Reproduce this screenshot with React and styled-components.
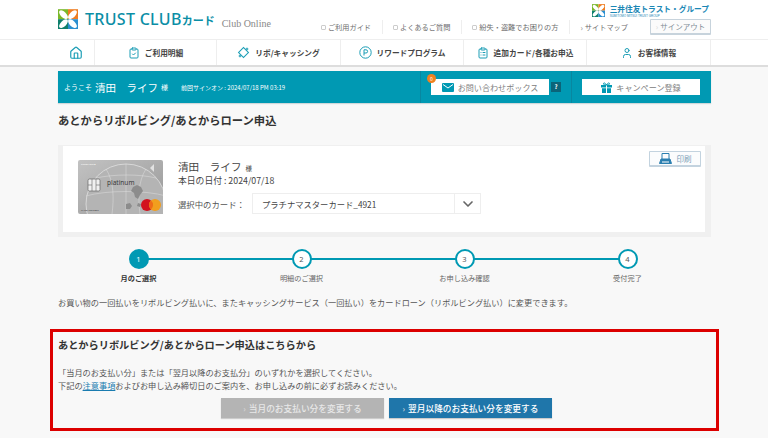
import React from 'react'
import styled, { createGlobalStyle } from 'styled-components'
import { Home, ClipboardCheck, ClipboardList, User, ChevronDown } from 'lucide-react'

const GlobalStyle = createGlobalStyle`
  html, body {
    margin: 0;
    padding: 0;
    background: #f8f8f8;
    overflow: hidden;
  }
  body {
    font-family: "Noto Sans CJK JP", "Noto Sans", sans-serif;
    color: #444;
  }
`

const Page = styled.div`
  width: 768px;
  height: 438px;
  overflow: hidden;
`

const HeaderBar = styled.header`
  height: 39px;
  background: #fff;
  padding: 0 57px 0 58px;
  display: flex;
  justify-content: space-between;
`

const BrandBlock = styled.div`
  display: flex;
  align-items: flex-start;
  padding-top: 9px;
`

const BrandName = styled.span`
  font-family: "Noto Sans", sans-serif;
  font-size: 16px;
  line-height: 20px;
  font-weight: 500;
  color: #0b8ea6;
  margin-left: 7px;
  white-space: nowrap;
  letter-spacing: 0.3px;

  b {
    font-family: "Noto Sans CJK JP", sans-serif;
    font-size: 11px;
    font-weight: 700;
    letter-spacing: 0;
  }
`

const BrandSub = styled.span`
  font-family: "Liberation Serif", serif;
  font-size: 10px;
  color: #888;
  margin: 9px 0 0 7px;
  white-space: nowrap;
`

const HeaderRight = styled.div`
  display: flex;
  flex-direction: column;
  align-items: flex-end;
`

const GroupLogo = styled.div`
  box-sizing: border-box;
  display: flex;
  align-items: flex-start;
  gap: 5px;
  height: 19px;
  padding-top: 4px;
  margin-right: 2px;
`

const GroupText = styled.div`
  display: flex;
  flex-direction: column;
  color: #1b87b5;
  font-size: 7.7px;
  font-weight: 700;
  line-height: 10px;
  white-space: nowrap;
`

const GroupSmall = styled.span`
  font-family: "Liberation Sans", sans-serif;
  font-size: 3px;
  line-height: 4px;
  font-weight: 400;
`

const UtilRow = styled.nav`
  display: flex;
  align-items: center;
  height: 16px;
`

const UtilLink = styled.a`
  display: flex;
  align-items: center;
  gap: 2px;
  font-size: 7.2px;
  color: #6e6e6e;
  padding: 0 ${({ $plain }) => ($plain ? 22 : 11)}px 0 10px;
  height: 14px;
  border-right: ${({ $plain }) => ($plain ? '0' : '1px solid #eee')};
  white-space: nowrap;
`

const UtilMark = styled.i`
  width: 3px;
  height: 3px;
  border: 1px solid #ccc;
  border-radius: 1px;
`

const Chevron = styled.span`
  font-size: 8px;
  color: ${({ $light }) => ($light ? '#d8d8d8' : '#888')};
`

const SignOut = styled.a`
  display: flex;
  align-items: center;
  justify-content: center;
  gap: 2px;
  width: 61px;
  height: 16px;
  font-size: 7.5px;
  color: #7f8d97;
  background: #fbfbfb;
  border: 1px solid #c7d3dc;
  border-bottom-width: 2px;
  box-sizing: border-box;
  border-radius: 1px;
`

const NavBar = styled.nav`
  box-sizing: border-box;
  height: 28px;
  background: #fff;
  border-top: 1px solid #eee;
  border-bottom: 2px solid #ddd;
  padding-left: 58px;
  display: flex;
`

const NavItem = styled.a`
  width: ${({ $w }) => $w}px;
  flex: none;
  box-sizing: border-box;
  display: flex;
  align-items: center;
  justify-content: center;
  gap: 5px;
  border-right: 1px solid #eee;
  font-size: 7.7px;
  font-weight: 700;
  color: #444;
  white-space: nowrap;

  svg {
    color: #1a9db5;
  }
`

const Container = styled.main`
  width: 653px;
  margin: 4px 0 0 58px;
`

const WelcomeBar = styled.section`
  height: 32px;
  background: #0099b3;
  display: flex;
  color: #fff;
  box-shadow: 0 1px 1px #cfd8da;
`

const Greeting = styled.div`
  flex: 1;
  display: flex;
  align-items: center;
  padding-left: 6px;
  font-size: 7px;
  white-space: nowrap;
`

const GreetName = styled.span`
  font-size: 10.5px;
  margin: 0 3px;
`

const LastSign = styled.span`
  font-size: 6px;
  margin-left: 13px;
`

const BarCell = styled.div`
  width: ${({ $w }) => $w}px;
  box-sizing: border-box;
  border-left: 1px solid #0887a0;
  display: flex;
  align-items: center;
  gap: 2px;
  padding-left: ${({ $pad }) => $pad}px;
`

const BarButton = styled.a`
  position: relative;
  width: 118px;
  height: 16px;
  background: #fff;
  display: flex;
  align-items: center;
  justify-content: center;
  gap: 4px;
  font-size: 8.1px;
  color: #808080;
  white-space: nowrap;

  svg {
    color: #0099b3;
  }
`

const Badge = styled.span`
  position: absolute;
  left: -4px;
  top: -5px;
  width: 9px;
  height: 9px;
  border-radius: 50%;
  background: #f0811f;
  color: #fff;
  font-size: 5px;
  line-height: 9px;
  text-align: center;
`

const HelpMark = styled.span`
  width: 10px;
  height: 10px;
  background: #0b6479;
  color: #fff;
  font-size: 6px;
  font-weight: 700;
  line-height: 10px;
  text-align: center;
`

const PageTitle = styled.h1`
  margin: 9px 0 17px;
  font-size: 11.3px;
  line-height: 16px;
  font-weight: 700;
  color: #333;
`

const CardPanel = styled.section`
  position: relative;
  box-sizing: border-box;
  height: 92px;
  background: #fff;
  border: 5px solid #f0f0f0;
  border-top-width: 1px;
  border-right-width: 6px;
  display: flex;
  padding: 14px 0 0 15px;
`

const CardInfo = styled.div`
  margin-left: 15px;
  flex: 1;
`

const HolderName = styled.div`
  font-size: 10.6px;
  line-height: 12px;
  margin-top: 1px;
  color: #444;

  small {
    font-size: 6.5px;
    margin-left: 4px;
  }
`

const TodayLine = styled.div`
  font-size: 8.8px;
  line-height: 10px;
  margin-top: 2px;
  color: #444;
`

const SelectRow = styled.div`
  display: flex;
  align-items: center;
  margin-top: 7px;
  font-size: 8.4px;
  color: #555;
`

const SelectBox = styled.div`
  width: 229px;
  height: 21px;
  box-sizing: border-box;
  margin-left: 7px;
  border: 1px solid #eee;
  display: flex;
  align-items: center;
  padding-left: 9px;
  font-size: 8.3px;
  color: #444;
`

const SelectArrow = styled.span`
  margin-left: auto;
  width: 25px;
  height: 100%;
  border-left: 1px solid #eee;
  display: flex;
  align-items: center;
  justify-content: center;
  color: #666;
`

const PrintButton = styled.a`
  position: absolute;
  top: 5px;
  right: 4px;
  width: 52px;
  height: 16px;
  box-sizing: border-box;
  border: 1px solid #c3d3df;
  border-bottom-width: 2px;
  border-radius: 1px;
  display: flex;
  align-items: center;
  justify-content: center;
  gap: 5px;
  font-size: 7.5px;
  color: #7da0b8;
  background: #fbfcfd;

  svg {
    color: #2a7fb0;
  }
`

const StepList = styled.ol`
  list-style: none;
  margin: 12px 0 0 -1px;
  padding: 0;
  display: grid;
  grid-template-columns: repeat(4, 163px);
`

const Step = styled.li`
  position: relative;
  display: flex;
  flex-direction: column;
  align-items: center;

  &:not(:last-child)::after {
    content: '';
    position: absolute;
    left: 50%;
    width: 100%;
    top: 9px;
    height: 2px;
    background: #0099b3;
  }
`

const StepDot = styled.span`
  position: relative;
  z-index: 1;
  width: 20px;
  height: 20px;
  box-sizing: border-box;
  border-radius: 50%;
  border: 2px solid #0099b3;
  background: ${({ $active }) => ($active ? '#0099b3' : '#fff')};
  color: ${({ $active }) => ($active ? '#fff' : '#555')};
  font-family: "Noto Sans", sans-serif;
  font-size: 7.5px;
  font-weight: 400;
  line-height: 16px;
  text-align: center;
`

const StepLabel = styled.span`
  margin-top: 4px;
  font-size: 7.2px;
  line-height: 11px;
  font-weight: ${({ $active }) => ($active ? 700 : 400)};
  color: ${({ $active }) => ($active ? '#333' : '#666')};
`

const Lead = styled.p`
  margin: 12px 0 0;
  font-size: 8.2px;
  line-height: 13px;
  color: #555;
  white-space: nowrap;
`

const ApplyBox = styled.section`
  box-sizing: border-box;
  width: 669px;
  height: 102px;
  margin: 20px 0 0 -8px;
  border: 3px solid #dc0000;
  padding: 5px 5px 0;
`

const ApplyTitle = styled.h2`
  margin: 0 0 13px;
  font-size: 10.2px;
  line-height: 16px;
  font-weight: 700;
  color: #333;
`

const ApplyText = styled.p`
  margin: 0;
  font-size: 8.2px;
  line-height: 13px;
  color: #555;
  white-space: nowrap;

  a {
    color: #1a7cb0;
    text-decoration: underline;
  }
`

const ButtonRow = styled.div`
  display: flex;
  gap: 5px;
  margin: 6px 0 0 163px;
`

const ActionButton = styled.a`
  width: 163px;
  height: 20px;
  display: flex;
  align-items: center;
  justify-content: center;
  gap: 3px;
  font-size: 8.7px;
  font-weight: 500;
  white-space: nowrap;
  color: ${({ $muted }) => ($muted ? '#e8e8e8' : '#fff')};
  background: ${({ $muted }) => ($muted ? '#b4b4b4' : '#1f76aa')};
  box-shadow: 0 1px 1px #ccc;
`

function Diamond() {
  return (
    <svg width="13" height="13" viewBox="0 0 13 13" fill="none" stroke="currentColor" strokeWidth="1">
      <rect x="3" y="3" width="7" height="7" transform="rotate(45 6.5 6.5)" />
      <circle cx="10" cy="3" r="0.9" fill="#fff" />
      <circle cx="3" cy="10" r="0.9" fill="#fff" />
    </svg>
  )
}

function PointMark() {
  return (
    <svg width="13" height="13" viewBox="0 0 13 13" fill="none" stroke="currentColor">
      <circle cx="6.5" cy="6.5" r="5.7" />
      <path d="M5 9.500V3.800h2a1.600 1.600 0 0 1 0 3.200H5" />
    </svg>
  )
}

function MailFilled() {
  return (
    <svg width="12" height="9" viewBox="0 0 12 9">
      <rect width="12" height="9" rx="1" fill="currentColor" />
      <path d="M1 1.500l5 3.500 5-3.500" fill="none" stroke="#fff" />
    </svg>
  )
}

function GiftFilled() {
  return (
    <svg width="11" height="11" viewBox="0 0 11 11" fill="currentColor">
      <path d="M0 3h5v2.500H0zM6 3h5v2.500H6zM1 6.300h4V11H1zM6 6.300h4V11H6z" />
      <path d="M5.500 3C4 .5 2.500.5 2.500 1.700S4 3 5.500 3zM5.500 3C7 .5 8.500.5 8.500 1.700S7 3 5.500 3z" fill="none" stroke="currentColor" />
    </svg>
  )
}

function PrinterFlat() {
  return (
    <svg width="13" height="11" viewBox="0 0 13 11" fill="none" stroke="currentColor">
      <path d="M3 6V.5h7V6" />
      <path d="M.5 10.500l1.500-4.500h9l1.500 4.500z" fill="currentColor" />
      <path d="M3 9h7" stroke="#fff" />
    </svg>
  )
}

function BrandMark({ size }) {
  return (
    <svg width={size} height={size * 1.02} viewBox="0 0 20 20">
      <rect width="10" height="10" fill="#7ab829" />
      <rect x="10" width="10" height="10" fill="#ee7d22" />
      <rect y="10" width="10" height="10" fill="#0f7f6c" />
      <rect x="10" y="10" width="10" height="10" fill="#2b8fd0" />
      <g fill="#fff">
        <ellipse cx="5.500" cy="5.500" rx="5.500" ry="2.800" transform="rotate(45 5.500 5.500)" />
        <ellipse cx="14.500" cy="5.500" rx="5.500" ry="2.800" transform="rotate(-45 14.500 5.500)" />
        <ellipse cx="5.500" cy="14.500" rx="5.500" ry="2.800" transform="rotate(-45 5.500 14.500)" />
        <ellipse cx="14.500" cy="14.500" rx="5.500" ry="2.800" transform="rotate(45 14.500 14.500)" />
      </g>
    </svg>
  )
}

function CardArt() {
  return (
    <svg width="85" height="54" viewBox="0 0 85 54">
      <defs>
        <linearGradient id="cardFill" x1="0" y1="0" x2="1" y2="1">
          <stop offset="0" stopColor="#c2c2c2" />
          <stop offset="0.5" stopColor="#adadad" />
          <stop offset="1" stopColor="#969696" />
        </linearGradient>
      </defs>
      <rect width="85" height="54" rx="2" fill="url(#cardFill)" />
      <circle cx="48" cy="44" r="40" fill="#b4b4b4" stroke="#e6e6e6" strokeWidth="0.7" />
      <path d="M48 4v50M28 9c8 12 8 30 6 45M68 9c-8 12-8 30-6 45M8 36c20-6 60-6 80 0M18 18c18-4 44-4 60 0" fill="none" stroke="#dedede" strokeWidth="0.5" />
      <path d="M55 27l4-2 4 2 2 4-3 4-2 4-3-2-1-4-3-2z" fill="#8c8c8c" />
      <path d="M48 44l4-1 2 3-2 3h-4zM60 43l3 1-1 3-3-1z" fill="#8c8c8c" />
      <rect x="10" y="19" width="12" height="12" rx="1.500" fill="#f0f0f0" stroke="#666" strokeWidth="0.7" />
      <path d="M10 25h4M18 25h4M14 19v12M18 19v12" stroke="#666" strokeWidth="0.6" />
      <path d="M76 4l-4 4 4 4z" fill="#e2e2e2" />
      <text x="29" y="25" fontFamily="Noto Sans, sans-serif" fontSize="6.500" fill="#3a3a3a">platinum</text>
      <text x="3" y="5" fontFamily="Noto Sans, sans-serif" fontSize="2.500" fill="#fff">TRUST CLUB</text>
      <text x="3" y="51" fontFamily="Noto Sans, sans-serif" fontSize="2.500" fill="#444">CARD MEMBER</text>
      <circle cx="69" cy="45" r="6" fill="#d2121e" />
      <circle cx="77" cy="45" r="6" fill="#f19e1e" />
      <path d="M73 40.500a6 6 0 0 1 0 9a6 6 0 0 1 0-9z" fill="#ee6a18" />
    </svg>
  )
}

const navItems = [
  { label: 'ご利用明細', w: 122, icon: <ClipboardCheck size={12} /> },
  { label: 'リボ/キャッシング', w: 124, icon: <Diamond /> },
  { label: 'リワードプログラム', w: 123, icon: <PointMark /> },
  { label: '追加カード/各種お申込', w: 123, icon: <ClipboardList size={12} /> },
  { label: 'お客様情報', w: 124, icon: <User size={12} /> },
]

const steps = ['月のご選択', '明細のご選択', 'お申し込み確認', '受付完了']

export default function App() {
  return (
    <Page>
      <GlobalStyle />
      <HeaderBar>
        <BrandBlock>
          <BrandMark size={20} />
          <BrandName>TRUST CLUB<b>カード</b></BrandName>
          <BrandSub>Club Online</BrandSub>
        </BrandBlock>
        <HeaderRight>
          <GroupLogo>
            <BrandMark size={13} />
            <GroupText>
              三井住友トラスト・グループ
              <GroupSmall>SUMITOMO MITSUI TRUST GROUP</GroupSmall>
            </GroupText>
          </GroupLogo>
          <UtilRow>
            <UtilLink><UtilMark />ご利用ガイド</UtilLink>
            <UtilLink><UtilMark />よくあるご質問</UtilLink>
            <UtilLink><UtilMark />紛失・盗難でお困りの方</UtilLink>
            <UtilLink $plain><Chevron>›</Chevron>サイトマップ</UtilLink>
            <SignOut><Chevron $light>›</Chevron>サインアウト</SignOut>
          </UtilRow>
        </HeaderRight>
      </HeaderBar>

      <NavBar>
        <NavItem $w={37}><Home size={14} /></NavItem>
        {navItems.map((item) => (
          <NavItem key={item.label} $w={item.w}>
            {item.icon}
            {item.label}
          </NavItem>
        ))}
      </NavBar>

      <Container>
        <WelcomeBar>
          <Greeting>
            ようこそ<GreetName>清田　ライフ</GreetName>様
            <LastSign>前回サインオン : 2024/07/18 PM 03:19</LastSign>
          </Greeting>
          <BarCell $w={151} $pad={10}>
            <BarButton>
              <Badge>0</Badge>
              <MailFilled />
              お問い合わせボックス
            </BarButton>
            <HelpMark>?</HelpMark>
          </BarCell>
          <BarCell $w={140} $pad={10}>
            <BarButton>
              <GiftFilled />
              キャンペーン登録
            </BarButton>
          </BarCell>
        </WelcomeBar>

        <PageTitle>あとからリボルビング/あとからローン申込</PageTitle>

        <CardPanel>
          <CardArt />
          <CardInfo>
            <HolderName>清田　ライフ<small>様</small></HolderName>
            <TodayLine>本日の日付 : 2024/07/18</TodayLine>
            <SelectRow>
              選択中のカード：
              <SelectBox>
                プラチナマスターカード_4921
                <SelectArrow><ChevronDown size={16} strokeWidth={2.5} /></SelectArrow>
              </SelectBox>
            </SelectRow>
          </CardInfo>
          <PrintButton><PrinterFlat />印刷</PrintButton>
        </CardPanel>

        <StepList>
          {steps.map((label, i) => (
            <Step key={label}>
              <StepDot $active={i === 0}>{i + 1}</StepDot>
              <StepLabel $active={i === 0}>{label}</StepLabel>
            </Step>
          ))}
        </StepList>

        <Lead>お買い物の一回払いをリボルビング払いに、またキャッシングサービス（一回払い）をカードローン（リボルビング払い）に変更できます。</Lead>

        <ApplyBox>
          <ApplyTitle>あとからリボルビング/あとからローン申込はこちらから</ApplyTitle>
          <ApplyText>「当月のお支払い分」または「翌月以降のお支払分」のいずれかを選択してください。</ApplyText>
          <ApplyText>下記の<a>注意事項</a>およびお申し込み締切日のご案内を、お申し込みの前に必ずお読みください。</ApplyText>
          <ButtonRow>
            <ActionButton $muted><Chevron $light>›</Chevron>当月のお支払い分を変更する</ActionButton>
            <ActionButton><Chevron $light>›</Chevron>翌月以降のお支払い分を変更する</ActionButton>
          </ButtonRow>
        </ApplyBox>
      </Container>
    </Page>
  )
}
